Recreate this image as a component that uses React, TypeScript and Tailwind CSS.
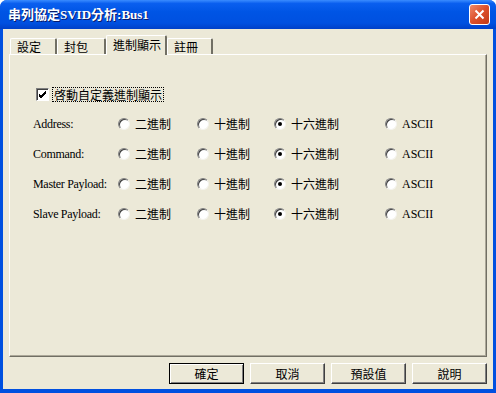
import React from "react";

const ROWS = ["Address:", "Command:", "Master Payload:", "Slave Payload:"];
const OPTIONS = ["二進制", "十進制", "十六進制", "ASCII"];
const TABS = [
  { label: "設定", w: "w-[47px]" },
  { label: "封包", w: "w-[49px]" },
  { label: "進制顯示", w: "w-[61px]", active: true },
  { label: "註冊", w: "w-[46px]" },
];
const BUTTONS = ["確定", "取消", "預設值", "說明"];

function Radio({ checked }: { checked?: boolean }) {
  return (
    <span className="w-[12px] h-[12px] rounded-full bg-white border border-t-[#808080] border-l-[#808080] border-b-[#f4f3ee] border-r-[#f4f3ee] shadow-[inset_1px_1px_0_#404040] flex items-center justify-center shrink-0">
      {checked && <span className="w-[4px] h-[4px] rounded-full bg-black" />}
    </span>
  );
}

function Checkbox() {
  return (
    <span className="w-[13px] h-[13px] bg-white border border-t-[#808080] border-l-[#808080] border-b-white border-r-white shadow-[inset_1px_1px_0_#404040] flex items-center justify-center shrink-0">
      <svg width="9" height="9" viewBox="0 0 9 9">
        <path d="M1 4 L3 6 L8 1 M1 5 L3 7 L8 2 M1 6 L3 8 L8 3" stroke="#000" strokeWidth="1" fill="none" shapeRendering="crispEdges" />
      </svg>
    </span>
  );
}

export default function App() {
  return (
    <div className="w-[496px] h-[393px] flex flex-col bg-[#0050e0] rounded-t-[7px] overflow-hidden font-['Liberation_Serif','Noto_Sans_CJK_TC',serif] text-[12px] text-black">
      <div className="h-[29px] shrink-0 flex items-center pl-[8px] pr-[6px] bg-[linear-gradient(#3a8cff_0%,#0a5fef_12%,#0055e5_40%,#0050e0_80%,#0040c8_100%)]">
        <span className="flex-1 text-white font-bold text-[13px] leading-none [text-shadow:1px_1px_0_#0a1a6a]">
          串列協定SVID分析:Bus1
        </span>
        <span className="w-[21px] h-[21px] rounded-[3px] border border-white bg-[linear-gradient(135deg,#f08a6a,#dc4f2a_50%,#c23a17)] flex items-center justify-center">
          <svg width="11" height="11" viewBox="0 0 11 11">
            <path d="M1.5 1.5 L9.5 9.5 M9.5 1.5 L1.5 9.5" stroke="#fff" strokeWidth="2" />
          </svg>
        </span>
      </div>

      <div className="flex-1 mx-[3px] mb-[4px] bg-[#ece9d8] flex flex-col px-[6px] pt-[6px] pb-[5px] font-['Noto_Sans_CJK_TC',sans-serif]">
        <div className="h-[19px] flex items-end pl-[1px] relative z-10">
          {TABS.map((t) =>
            t.active ? (
              <div
                key={t.label}
                className={`${t.w} h-[20px] mb-[-1px] bg-[#ece9d8] border-t border-l border-white border-r-2 border-r-[#716f64] rounded-t-[2px] pl-[6px] pt-[1px] leading-[15px]`}
              >
                {t.label}
              </div>
            ) : (
              <div
                key={t.label}
                className={`${t.w} h-[16px] bg-[#ece9d8] border-t border-l border-white border-r-2 border-r-[#716f64] rounded-t-[2px] pl-[6px] leading-[15px]`}
              >
                {t.label}
              </div>
            )
          )}
        </div>

        <div className="h-[303px] shrink-0 border border-t-white border-l-white border-r-[#716f64] border-b-[#716f64] shadow-[inset_-1px_-1px_0_#aca899] pl-[23px] pt-[32px]">
          <div className="ml-[3px] h-[15px] flex items-center gap-[3px]">
            <Checkbox />
            <span className="border border-dotted border-black px-[1px] leading-[13px]">啓動自定義進制顯示</span>
          </div>

          <div className="mt-[7px] grid grid-cols-[85px_79px_77px_111px_80px]">
            {ROWS.map((r) => (
              <React.Fragment key={r}>
                <div className="h-[30px] flex items-center font-['Liberation_Serif',serif] text-[12px] tracking-[-0.3px]">{r}</div>
                {OPTIONS.map((o, i) => (
                  <div key={o} className="h-[30px] flex items-center gap-[5px]">
                    <Radio checked={i === 2} />
                    <span className={o === "ASCII" ? "font-['Liberation_Serif',serif] text-[12px]" : ""}>{o}</span>
                  </div>
                ))}
              </React.Fragment>
            ))}
          </div>
        </div>

        <div className="mt-[6px] flex justify-end gap-[6px] pr-[0px]">
          {BUTTONS.map((b, i) => (
            <button
              key={b}
              className={
                i === 0
                  ? "w-[75px] h-[21px] bg-[#ece9d8] border border-black shadow-[inset_1px_1px_0_#fff,inset_-1px_-1px_0_#808080] leading-none"
                  : "w-[75px] h-[21px] bg-[#ece9d8] border border-t-white border-l-white border-r-[#404040] border-b-[#404040] shadow-[inset_-1px_-1px_0_#808080] leading-none"
              }
            >
              {b}
            </button>
          ))}
        </div>
      </div>
    </div>
  );
}
